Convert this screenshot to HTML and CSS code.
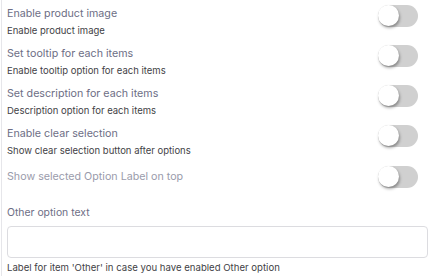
FILE: index.html
```html
<!DOCTYPE html>
<html lang="en">
<head>
    <meta charset="UTF-8">
    <meta name="viewport" content="width=device-width, initial-scale=1.0">
    <title>Option settings</title>
    <link rel="stylesheet" href="styles.css">
</head>
<body>
    <div class="panel">
        <div class="setting">
            <div class="setting-text">
                <div class="setting-title">Enable product image</div>
                <div class="setting-desc">Enable product image</div>
            </div>
            <label class="switch"><input type="checkbox"><span class="slider"></span></label>
        </div>
        <div class="setting">
            <div class="setting-text">
                <div class="setting-title">Set tooltip for each items</div>
                <div class="setting-desc">Enable tooltip option for each items</div>
            </div>
            <label class="switch"><input type="checkbox"><span class="slider"></span></label>
        </div>
        <div class="setting">
            <div class="setting-text">
                <div class="setting-title">Set description for each items</div>
                <div class="setting-desc">Description option for each items</div>
            </div>
            <label class="switch"><input type="checkbox"><span class="slider"></span></label>
        </div>
        <div class="setting">
            <div class="setting-text">
                <div class="setting-title">Enable clear selection</div>
                <div class="setting-desc">Show clear selection button after options</div>
            </div>
            <label class="switch"><input type="checkbox"><span class="slider"></span></label>
        </div>
        <div class="setting single">
            <div class="setting-text">
                <div class="setting-title muted">Show selected Option Label on top</div>
            </div>
            <label class="switch"><input type="checkbox"><span class="slider"></span></label>
        </div>

        <div class="field">
            <label class="field-label" for="other-text">Other option text</label>
            <input type="text" id="other-text" class="field-input">
            <div class="field-help">Label for item 'Other' in case you have enabled Other option</div>
        </div>
    </div>
</body>
</html>
```

FILE: styles.css
```css
body {
    margin: 0;
    padding: 0;
    background-color: #fff;
    font-family: Inter, "Noto Sans", sans-serif;
}
.panel {
    margin-left: 1px;
    border-left: 1px solid #e6e6ea;
    padding: 5px 12px 0 5px;
    height: 271px;
}
.setting {
    display: flex;
    justify-content: space-between;
    align-items: flex-start;
    height: 40px;
}
.setting.single {
    align-items: center;
    height: 22px;
    margin-top: 1px;
    margin-bottom: 18px;
}
.setting-title {
    font-size: 10.7px;
    color: #6d6e85;
    line-height: 16px;
    margin-top: 1px;
    margin-bottom: 1px;
}
.setting.single .setting-title {
    margin: 0;
}
.setting-title.muted {
    color: #9a9bab;
}
.setting-desc {
    font-size: 9.5px;
    color: #3f3f46;
    line-height: 15px;
}
.switch {
    position: relative;
    display: inline-block;
    width: 40px;
    height: 22px;
    margin-right: 10px;
}
.switch input {
    display: none;
}
.slider {
    position: absolute;
    inset: 0;
    background-color: #d0d0d0;
    border-radius: 11px;
}
.slider::before {
    content: "";
    position: absolute;
    left: 0;
    top: 0;
    width: 21px;
    height: 21px;
    border-radius: 50%;
    background-color: #fff;
    box-shadow: 1px 2px 3px rgba(0, 0, 0, 0.35);
}
.field {
    margin-top: 1px;
}
.field-label {
    display: block;
    font-size: 10.4px;
    line-height: 14px;
    color: #6d6e85;
    margin-bottom: 6px;
}
.field-input {
    display: block;
    box-sizing: border-box;
    width: 100%;
    height: 32px;
    border: 1px solid #dcdce0;
    border-radius: 4px;
    outline: none;
}
.field-help {
    font-size: 9.6px;
    line-height: 13px;
    color: #3f3f46;
    margin-top: 3px;
}
```
